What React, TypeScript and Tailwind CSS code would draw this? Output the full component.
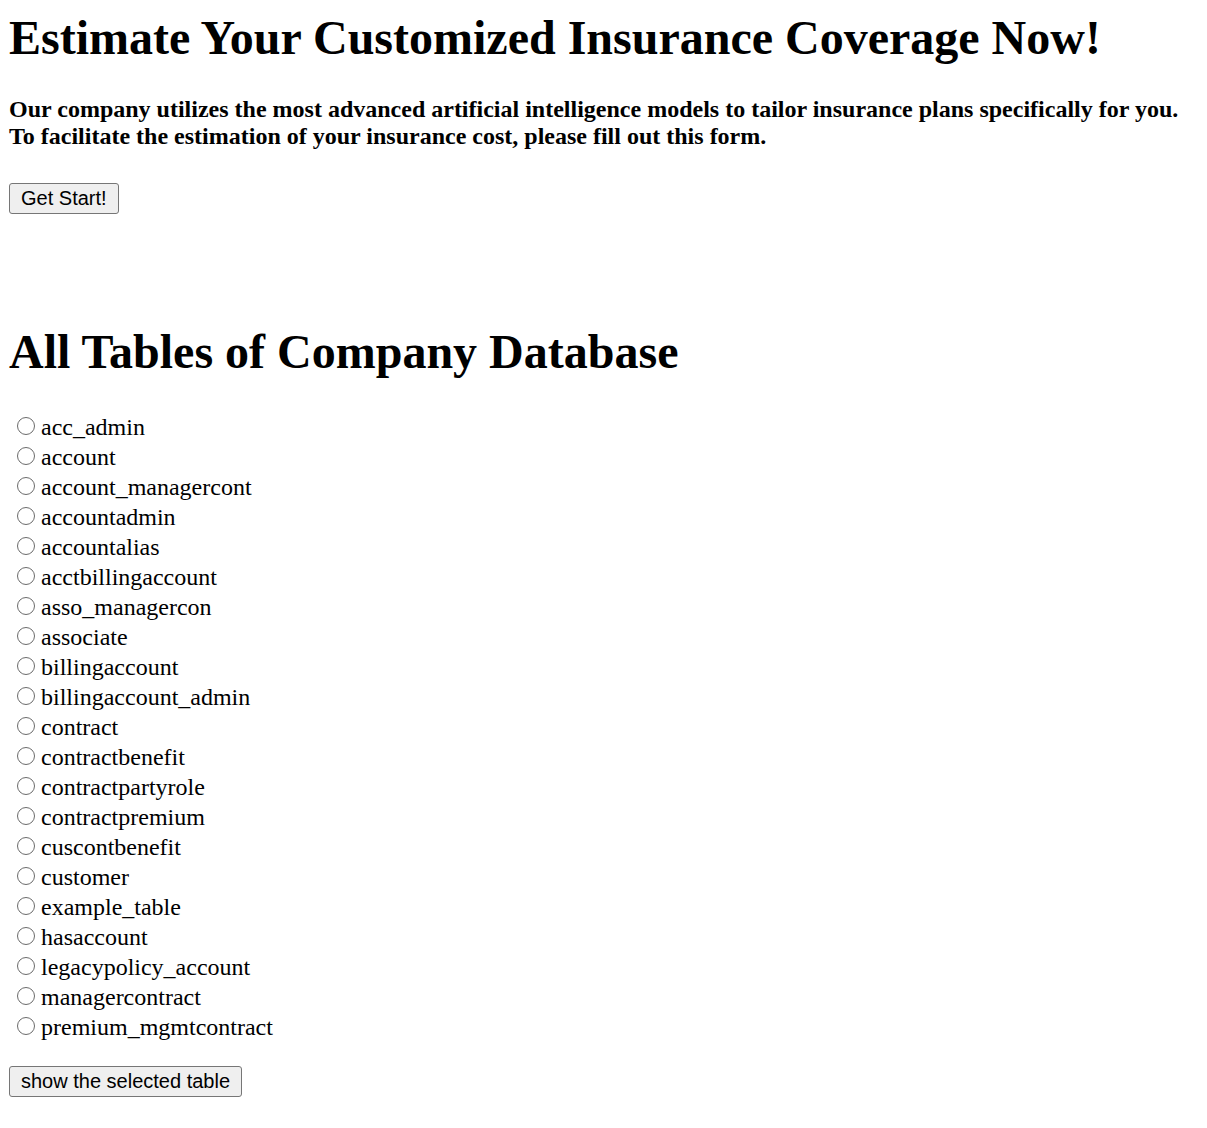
import React from "react";

const tables = [
  "acc_admin",
  "account",
  "account_managercont",
  "accountadmin",
  "accountalias",
  "acctbillingaccount",
  "asso_managercon",
  "associate",
  "billingaccount",
  "billingaccount_admin",
  "contract",
  "contractbenefit",
  "contractpartyrole",
  "contractpremium",
  "cuscontbenefit",
  "customer",
  "example_table",
  "hasaccount",
  "legacypolicy_account",
  "managercontract",
  "premium_mgmtcontract",
];

const serif = "font-['Liberation_Serif','Times_New_Roman',serif]";

function Btn({ children }: { children: React.ReactNode }) {
  return (
    <button
      type="button"
      className="h-[31px] px-[11px] bg-[#efefef] border border-[#767676] rounded-[3px] text-black text-[20px] leading-[23px] font-['Liberation_Sans',Arial,sans-serif]"
    >
      {children}
    </button>
  );
}

export default function App() {
  return (
    <div className={`bg-white min-h-[1128px] pl-[9px] pt-[11px] text-black ${serif}`}>
      <h1 className="text-[48px] font-bold leading-[53px]">
        Estimate Your Customized Insurance Coverage Now!
      </h1>
      <h3 className="mt-[32px] text-[24px] font-bold leading-[27px]">
        Our company utilizes the most advanced artificial intelligence models to tailor insurance plans specifically for you.
        <br />
        To facilitate the estimation of your insurance cost, please fill out this form.
      </h3>
      <div className="mt-[33px] flex">
        <Btn>Get Start!</Btn>
      </div>
      <h1 className="mt-[111px] text-[48px] font-bold leading-[53px]">All Tables of Company Database</h1>
      <ul className="mt-[34px]">
        {tables.map((t) => (
          <li key={t} className="flex items-center h-[30px]">
            <span className="ml-[8px] mr-[6px] mb-[2px] w-[18px] h-[18px] rounded-full border-[1.5px] border-[#6b6b6b] bg-white shrink-0" />
            <span className="text-[24px] leading-[30px]">{t}</span>
          </li>
        ))}
      </ul>
      <div className="mt-[24px] flex">
        <Btn>show the selected table</Btn>
      </div>
    </div>
  );
}
